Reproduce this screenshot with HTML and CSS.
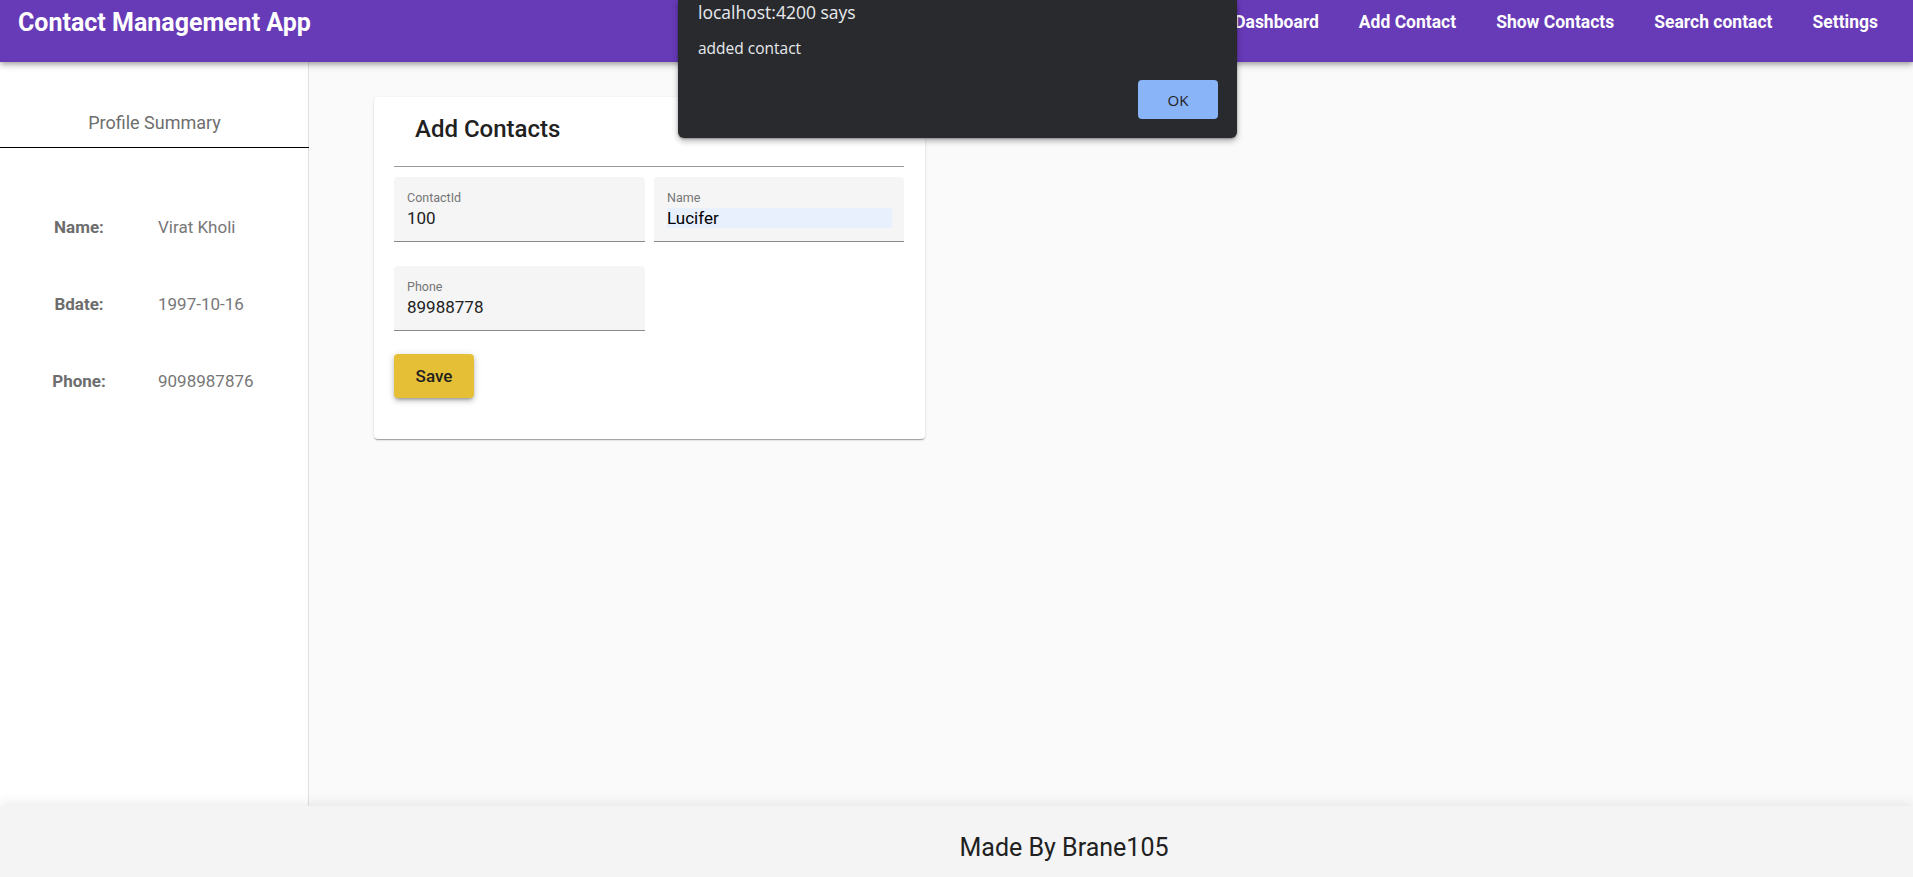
FILE: index.html
```html
<!DOCTYPE html>
<html lang="en">
<head>
<meta charset="utf-8">
<title>Contact Management App</title>
<link rel="stylesheet" href="styles.css">
</head>
<body>
<div class="app">
  <header class="toolbar">
    <div class="brand">Contact Management App</div>
    <nav class="nav">
      <a class="nav-link">Dashboard</a>
      <a class="nav-link">Add Contact</a>
      <a class="nav-link">Show Contacts</a>
      <a class="nav-link">Search contact</a>
      <a class="nav-link">Settings</a>
    </nav>
  </header>

  <div class="content">
    <aside class="sidebar">
      <div class="side-title">Profile Summary</div>
      <div class="profile">
        <div class="p-row"><span class="p-label">Name:</span><span class="p-value">Virat Kholi</span></div>
        <div class="p-row"><span class="p-label">Bdate:</span><span class="p-value">1997-10-16</span></div>
        <div class="p-row"><span class="p-label">Phone:</span><span class="p-value">9098987876</span></div>
      </div>
    </aside>

    <main class="main">
      <section class="card">
        <div class="card-head"><h2 class="card-title">Add Contacts</h2></div>
        <div class="form-grid">
          <div class="field">
            <div class="f-label">ContactId</div>
            <div class="f-value">100</div>
          </div>
          <div class="field">
            <div class="f-label">Name</div>
            <div class="f-value autofill">Lucifer</div>
          </div>
          <div class="field">
            <div class="f-label">Phone</div>
            <div class="f-value">89988778</div>
          </div>
        </div>
        <button class="save-btn">Save</button>
      </section>
    </main>
  </div>

  <footer class="footer">Made By Brane105</footer>

  <div class="alert">
    <div class="alert-title">localhost:4200 says</div>
    <div class="alert-msg">added contact</div>
    <div class="alert-actions"><button class="ok-btn">OK</button></div>
  </div>
</div>
</body>
</html>
```

FILE: styles.css
```css
* { box-sizing: border-box; }
html, body { margin: 0; padding: 0; }
body {
  font-family: Roboto, "Liberation Sans", Arial, sans-serif;
  background: #fafafa;
  color: #212121;
  width: 1913px;
  height: 877px;
  overflow: hidden;
}
.app {
  position: relative;
  height: 877px;
  display: flex;
  flex-direction: column;
}

/* toolbar */
.toolbar {
  height: 62px;
  flex: none;
  background: #673ab7;
  color: #fff;
  display: flex;
  align-items: center;
  justify-content: space-between;
  padding: 0 35px 0 18px;
  box-shadow: 0 2px 4px -1px rgba(0,0,0,.2), 0 4px 5px 0 rgba(0,0,0,.14), 0 1px 10px 0 rgba(0,0,0,.12);
  position: relative;
  z-index: 2;
}
.brand {
  font-size: 25px;
  font-weight: 700;
  margin-top: -18px;
}
.nav {
  display: flex;
  gap: 40px;
  margin-top: -18px;
}
.nav-link {
  font-size: 17.5px;
  font-weight: 700;
  color: #fff;
}

/* content */
.content {
  flex: 1;
  display: flex;
  min-height: 0;
}
.sidebar {
  width: 309px;
  flex: none;
  background: #fff;
  border-right: 1px solid #e0e0e0;
}
.side-title {
  text-align: center;
  font-size: 18px;
  line-height: 22px;
  color: #6e6e6e;
  padding: 50px 0 13px;
  border-bottom: 1px solid #000;
  margin-right: -1px;
}
.profile {
  padding-top: 40px;
}
.p-row {
  display: grid;
  grid-template-columns: 158px 1fr;
  height: 77px;
  align-items: center;
}
.p-label {
  text-align: center;
  font-weight: 700;
  font-size: 17px;
  color: #6d6d6d;
}
.p-value {
  font-size: 17px;
  color: #777;
}

.main {
  flex: 1;
  background: #fafafa;
  padding: 35px 0 0 65px;
}
.card {
  width: 551px;
  background: #fff;
  border-radius: 4px;
  padding: 0 21px 41px 20px;
  box-shadow: 0 2px 1px -1px rgba(0,0,0,.2), 0 1px 1px 0 rgba(0,0,0,.14), 0 1px 3px 0 rgba(0,0,0,.12);
}
.card-head {
  height: 70px;
  display: flex;
  align-items: center;
  padding-left: 21px;
  padding-bottom: 5px;
  border-bottom: 1px solid #9a9a9a;
}
.card-title {
  margin: 0;
  font-size: 24px;
  font-weight: 500;
  color: #212121;
}
.form-grid {
  display: grid;
  grid-template-columns: 251px 250px;
  column-gap: 9px;
  row-gap: 24px;
  margin-top: 10px;
}
.field {
  height: 65px;
  background: #f5f5f5;
  border-radius: 4px 4px 0 0;
  border-bottom: 1px solid #8a8a8a;
  padding: 14px 12px 0 13px;
}
.f-label {
  font-size: 12.5px;
  line-height: 14px;
  color: #757575;
}
.f-value {
  margin-top: 3px;
  font-size: 17px;
  line-height: 20px;
  color: #212121;
}
.f-value.autofill {
  background: #e8f0fe;
  color: #000;
}
.save-btn {
  margin-top: 23px;
  width: 80px;
  height: 44px;
  border: none;
  border-radius: 4px;
  background: #e5bf35;
  color: #212121;
  font-family: Roboto, "Liberation Sans", Arial, sans-serif;
  font-size: 17px;
  font-weight: 500;
  box-shadow: 0 3px 3px -2px rgba(0,0,0,.25), 0 3px 5px 0 rgba(0,0,0,.18), 0 1px 8px 0 rgba(0,0,0,.12);
}

/* footer */
.footer {
  height: 71px;
  flex: none;
  background: #f4f4f4;
  text-align: center;
  padding: 12px 0 0 215px;
  font-size: 25px;
  line-height: 60px;
  color: #212121;
  box-shadow: 0 -4px 10px rgba(0,0,0,.07);
  position: relative;
  z-index: 1;
}

/* alert dialog overlay */
.alert {
  position: absolute;
  left: 678px;
  top: 0;
  width: 559px;
  height: 138px;
  background: #292a2d;
  border-radius: 0 0 6px 6px;
  box-shadow: 0 3px 6px rgba(0,0,0,.3), 0 1px 2px rgba(0,0,0,.25);
  padding: 2px 19px 0 20px;
  font-family: "Open Sans", "Noto Sans", sans-serif;
  color: #e8eaed;
  z-index: 10;
}
.alert-title {
  font-size: 17.5px;
  line-height: 20px;
}
.alert-msg {
  margin-top: 16px;
  font-size: 15.5px;
  line-height: 20px;
}
.alert-actions {
  display: flex;
  justify-content: flex-end;
  margin-top: 22px;
}
.ok-btn {
  width: 80px;
  height: 39px;
  border: none;
  border-radius: 4px;
  background: #8ab4f8;
  color: #202124;
  font-family: "Open Sans", "Noto Sans", sans-serif;
  font-size: 15px;
}
```
